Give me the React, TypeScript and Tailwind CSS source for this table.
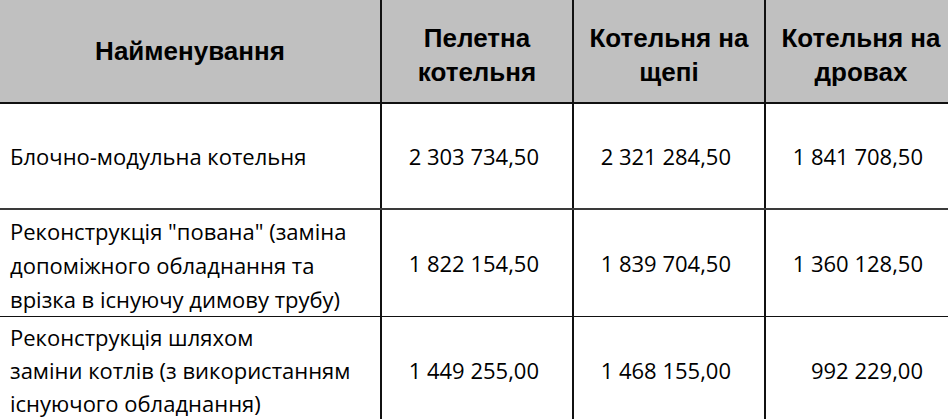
import React from "react";

const body = "font-['Open_Sans',sans-serif] text-[22px] text-black";
const head = "font-['Liberation_Sans',Arial,sans-serif] font-bold text-[26px] leading-[34px] text-black text-center";

type Row = { name: string[]; vals: string[]; h: string; border: string; pt: string; lh: string };

const rows: Row[] = [
  { name: ["Блочно-модульна котельня"], vals: ["2 303 734,50", "2 321 284,50", "1 841 708,50"], h: "h-[106px]", border: "border-b-2 border-[#3a3a3a]", pt: "", lh: "leading-[34px]" },
  {
    name: ["Реконструкція \"пована\" (заміна", "допоміжного обладнання та", "врізка в існуючу димову трубу)"],
    vals: ["1 822 154,50", "1 839 704,50", "1 360 128,50"],
    h: "h-[107px]",
    border: "border-b-[1.5px] border-[#111]",
    pt: "pt-[3px]",
    lh: "leading-[34px]",
  },
  {
    name: ["Реконструкція шляхом", "заміни котлів (з використанням", "існуючого обладнання)"],
    vals: ["1 449 255,00", "1 468 155,00", "992 229,00"],
    h: "h-[106px]",
    border: "",
    pt: "",
    lh: "leading-[33px]",
  },
];

export default function App() {
  return (
    <div className="w-[948px] h-[419px] overflow-hidden bg-white">
      <div className="w-[956px] flex flex-col">
        <div className="flex h-[104px] bg-[#c0c0c0] border-b-2 border-[#111]">
          <div className={`w-[380px] shrink-0 flex items-center justify-center ${head}`}>Найменування</div>
          <div className={`w-[192px] shrink-0 flex items-center justify-center pt-[8px] border-l-2 border-[#111] ${head}`}>
            <span>Пелетна<br />котельня</span>
          </div>
          <div className={`w-[192px] shrink-0 flex items-center justify-center pt-[8px] border-l-2 border-[#111] ${head}`}>
            <span>Котельня на<br />щепі</span>
          </div>
          <div className={`w-[192px] shrink-0 flex items-center justify-center pt-[8px] border-l-2 border-[#111] ${head}`}>
            <span>Котельня на<br />дровах</span>
          </div>
        </div>
        {rows.map((r, i) => (
          <div key={i} className={`flex ${r.h} ${r.border}`}>
            <div className={`w-[380px] shrink-0 flex flex-col justify-center pl-[10px] ${r.pt} ${r.lh} ${body}`}>
              {r.name.map((l, j) => (
                <div key={j} className="whitespace-nowrap">{l}</div>
              ))}
            </div>
            {r.vals.map((v, j) => (
              <div key={j} className={`w-[192px] shrink-0 flex items-center justify-end pr-[33px] border-l-2 border-[#111] leading-[34px] ${body}`}>
                {v}
              </div>
            ))}
          </div>
        ))}
      </div>
    </div>
  );
}
